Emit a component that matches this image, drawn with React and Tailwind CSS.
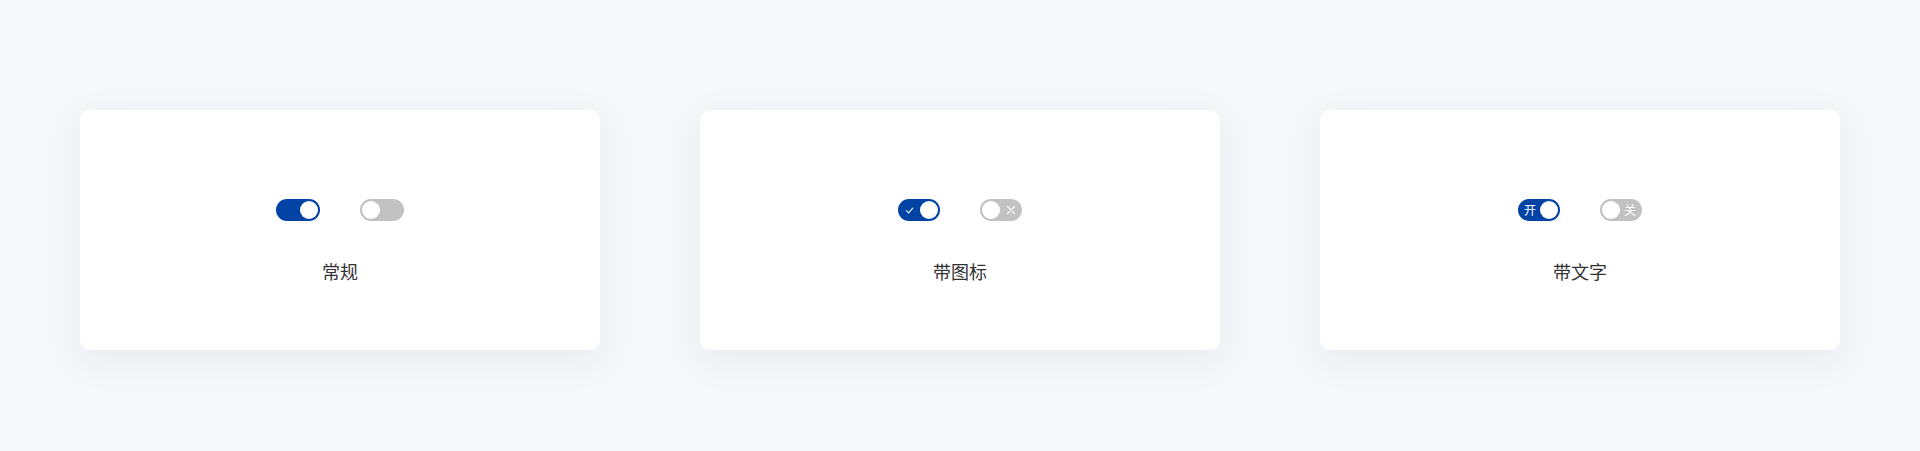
import React, { useState } from "react";

function Switch({ on, onToggle, kind, wide }) {
  const w = wide ? "w-[44px]" : "w-[42px]";
  return (
    <button
      onClick={onToggle}
      className={`relative flex h-[22px] ${w} items-center rounded-full p-[2px] transition-colors ${
        on ? "bg-[#0043a4] justify-end" : "bg-[#c2c2c2] justify-start"
      }`}
    >
      {/* inner mark */}
      {kind === "icon" && on && (
        <svg className="absolute left-[7px] top-[7px] h-[9px] w-[9px]" viewBox="0 0 10 10" fill="none">
          <path d="M1.5 5.2 L4 7.6 L8.6 2.4" stroke="white" strokeWidth="1.2" strokeLinecap="round" strokeLinejoin="round" />
        </svg>
      )}
      {kind === "icon" && !on && (
        <svg className="absolute right-[6px] top-[6px] h-[10px] w-[10px]" viewBox="0 0 10 10" fill="none">
          <path d="M1.5 1.5 L8.5 8.5 M8.5 1.5 L1.5 8.5" stroke="white" strokeWidth="1.1" strokeLinecap="round" />
        </svg>
      )}
      {kind === "text" && (
        <span
          className={`absolute top-0 text-[12px] leading-[22px] text-white ${on ? "left-[6px]" : "right-[6px]"}`}
        >
          {on ? "开" : "关"}
        </span>
      )}
      <span className="block h-[18px] w-[18px] rounded-full bg-white" />
    </button>
  );
}

function Card({ label, kind, wide }) {
  const [a, setA] = useState(true);
  const [b, setB] = useState(false);
  return (
    <div className="flex h-[240px] w-[520px] flex-col items-center rounded-[10px] bg-white pt-[89px] shadow-[0_10px_40px_rgba(30,40,80,0.07)]">
      <div className="flex items-center gap-10">
        <Switch on={a} onToggle={() => setA(!a)} kind={kind} wide={wide} />
        <Switch on={b} onToggle={() => setB(!b)} kind={kind} wide={wide} />
      </div>
      <div className="mt-[38px] text-[18px] leading-[24px] text-[#333]">{label}</div>
    </div>
  );
}

export default function App() {
  return (
    <div
      className="flex h-[451px] w-full items-start justify-center gap-[100px] bg-[#f7f8fa] pt-[110px]"
      style={{ fontFamily: '"Noto Sans CJK SC", "Noto Sans", sans-serif' }}
    >
      <Card label="常规" kind="plain" wide />
      <Card label="带图标" kind="icon" />
      <Card label="带文字" kind="text" />
    </div>
  );
}
